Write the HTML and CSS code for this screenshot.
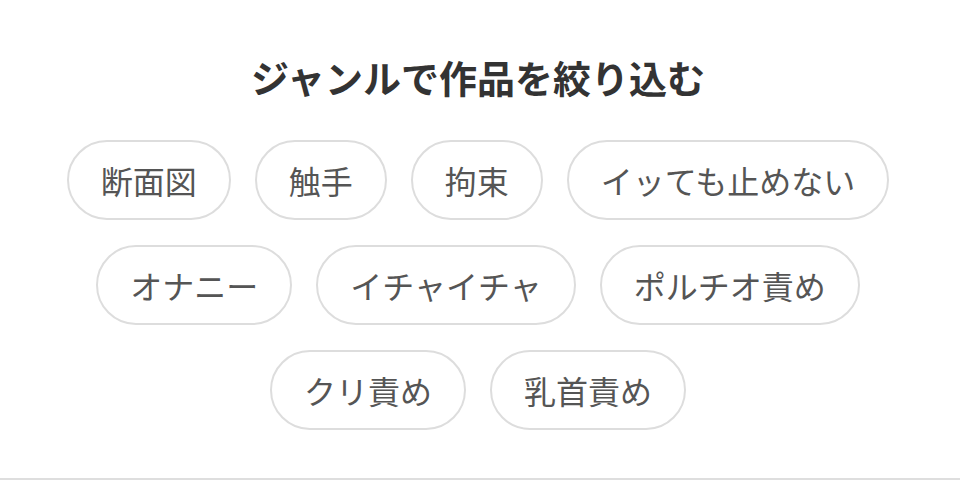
FILE: index.html
```html
<!DOCTYPE html>
<html lang="ja">
<head>
<meta charset="utf-8">
<link rel="stylesheet" href="styles.css">
</head>
<body>
<section class="genre">
  <h2 class="genre-title">ジャンルで作品を絞り込む</h2>
  <ul class="tags">
    <li class="tag">断面図</li>
    <li class="tag">触手</li>
    <li class="tag">拘束</li>
    <li class="tag">イッても止めない</li>
    <li class="tag">オナニー</li>
    <li class="tag">イチャイチャ</li>
    <li class="tag">ポルチオ責め</li>
    <li class="tag">クリ責め</li>
    <li class="tag">乳首責め</li>
  </ul>
</section>
</body>
</html>
```
FILE: styles.css
```css
html, body {
  margin: 0;
  padding: 0;
  background: #fff;
}
body {
  width: 960px;
  height: 480px;
  overflow: hidden;
  font-family: "Noto Sans CJK JP", "Noto Sans", sans-serif;
}
.genre {
  width: 960px;
  height: 480px;
  border-bottom: 2px solid #dedede;
  padding: 50px 4px 0 0;
  box-sizing: border-box;
}
.genre-title {
  margin: 0;
  text-align: center;
  font-size: 38px;
  line-height: 54px;
  font-weight: 700;
  color: #333;
}
.tags {
  list-style: none;
  margin: 36px 0 0;
  padding: 0;
  display: flex;
  flex-wrap: wrap;
  justify-content: center;
  column-gap: 24px;
  row-gap: 25px;
}
.tag {
  box-sizing: border-box;
  height: 80px;
  padding: 0 32px;
  border: 2px solid #dddddd;
  border-radius: 40px;
  font-size: 32px;
  line-height: 76px;
  color: #555;
  white-space: nowrap;
}
```
